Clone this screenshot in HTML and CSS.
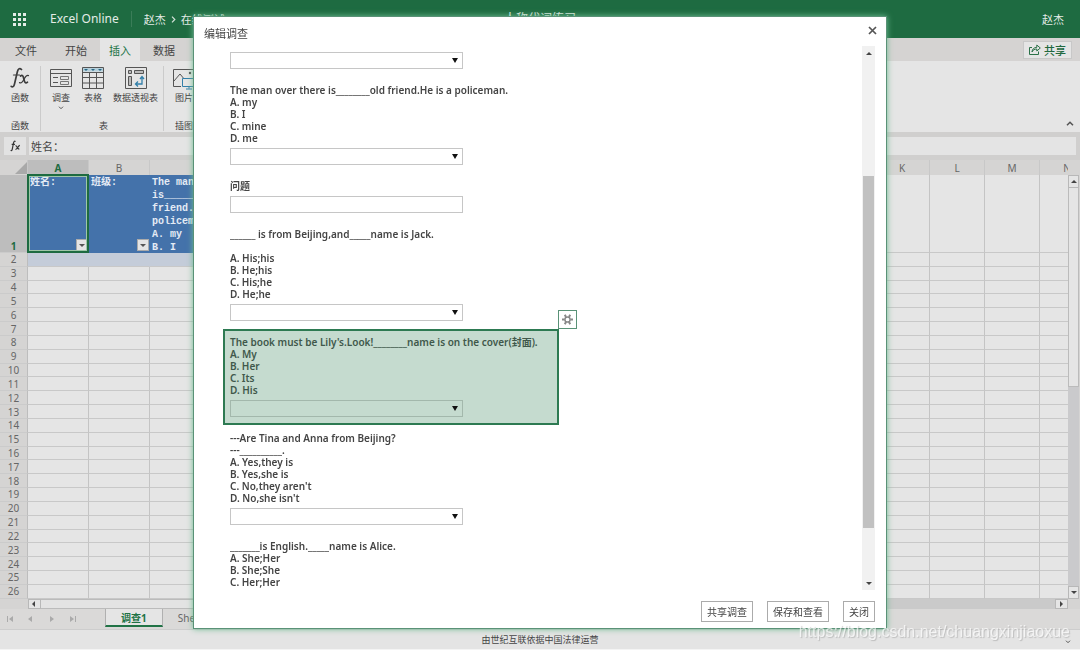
FILE: index.html
```html
<!DOCTYPE html>
<html lang="zh-CN">
<head>
<meta charset="utf-8">
<title>Excel Online</title>
<link rel="stylesheet" href="styles.css">
</head>
<body>
<div class="app">
  <header class="topbar">
    <button class="launcher" aria-label="应用启动器">
      <svg width="13" height="13" viewBox="0 0 13 13" fill="#e4ece7"><path d="M0 0h3v3H0zM5 0h3v3H5zM10 0h3v3h-3zM0 5h3v3H0zM5 5h3v3H5zM10 5h3v3h-3zM0 10h3v3H0zM5 10h3v3H5zM10 10h3v3h-3z"/></svg>
    </button>
    <span class="brand">Excel Online</span>
    <nav class="crumbs"><a href="#">赵杰</a><svg width="5" height="7" viewBox="0 0 5 7" fill="none" stroke="#d5e3da" stroke-width="1.2"><path d="M1 .7 3.8 3.5 1 6.3"/></svg><a href="#">在线测试</a></nav>
    <span class="doc-title">人称代词练习</span>
    <span class="user">赵杰</span>
  </header>

  <div class="tabs">
    <button class="tab tab-file">文件</button>
    <button class="tab">开始</button>
    <button class="tab tab-active">插入</button>
    <button class="tab">数据</button>
    <button class="share">
      <svg width="12" height="11" viewBox="0 0 12 11" fill="none" stroke="#2b7148" stroke-width="1"><path d="M3 3.5H.5v7h9V7.500"/><path d="M3 8c.3-3.200 2-4.500 4.800-4.600V1L11.300 4 7.800 7V5C5.500 5 4 6 3 8z"/></svg>
      共享
    </button>
  </div>

  <div class="ribbon">
    <section class="group">
      <div class="tools">
        <button class="tool tool-fx">
          <svg width="20" height="24" viewBox="0 0 20 24" fill="none" stroke="#3c3c3c" stroke-linecap="round"><path stroke-width="1.700" d="M11.500 3.500C9.500 1.500 8 3 7.300 6L4.500 18c-.6 2.800-2 3.500-3.300 2.300"/><path stroke-width="1.200" d="M3.500 9h6"/><path stroke-width="1.700" d="M10.500 10c2-1.500 2.700 0 3.300 2.800s1.300 5.500 3.700 3.400"/><path stroke-width="1.200" d="M18.500 9.600c-2-.8-3.300 1.400-4.500 3.600s-2.500 4.500-4.500 3.400"/></svg>
          <span>函数</span>
        </button>
      </div>
      <span class="group-name">函数</span>
    </section>
    <section class="group">
      <div class="tools">
        <button class="tool">
          <svg width="24" height="24" viewBox="0 0 24 24" fill="none" stroke="#555" ><path d="M1.500 3.500h21v17h-21z"/><path d="M1.500 7.500h21M4 11.500h5M4 16.500h5"/><path stroke="#777" d="M11.500 10.500h8v3h-8zM11.500 15.500h8v3h-8z"/></svg>
          <span>调查</span>
          <svg width="6" height="4" viewBox="0 0 6 4" fill="none" stroke="#555"><path d="M1 .7 3 2.700 5 .7"/></svg>
        </button>
        <button class="tool">
          <svg width="24" height="24" viewBox="0 0 24 24" fill="none" stroke="#555"><path fill="#b5d0dc" stroke="none" d="M2 2h20v3.500H2z"/><path d="M1.500 1.500h21v21h-21zM1.500 6.500h21M1.500 11.500h21M1.500 17h21M8.500 6.500v16M15.500 6.500v16"/><path fill="#286783" stroke="none" d="M3 3h4L5 5zM10 3h4l-2 2zM17 3h4l-2 2z"/></svg>
          <span>表格</span>
        </button>
        <button class="tool">
          <svg width="24" height="24" viewBox="0 0 24 24" fill="none" stroke="#555"><path d="M1.500 1.500h21v21h-21z"/><path fill="#bbb" d="M4.500 4.500h3v3h-3zM10.500 4.500h9v3h-9zM4.500 10.500h3v9h-3z"/><path stroke="#327fa9" stroke-width="1.300" d="M18 11v7h-6M16 13l2-2.500 2 2.500M14 15.500 11.500 18l2.500 2.500"/></svg>
          <span>数据透视表</span>
        </button>
      </div>
      <span class="group-name">表</span>
    </section>
    <section class="group">
      <div class="tools">
        <button class="tool">
          <svg width="24" height="24" viewBox="0 0 24 24" fill="none" stroke="#555"><path d="M22.500 9V3.500h-21v17H9M2 15l6-7 5 6"/><circle cx="18" cy="7" r="1.200" fill="#555" stroke="none"/><path fill="#e5e5e5" stroke="#327fa9" d="M10.500 12.500h13v8h-13zM17 20.500v2M14 23h6"/></svg>
          <span>图片</span>
        </button>
      </div>
      <span class="group-name">插图</span>
    </section>
    <button class="collapse" aria-label="折叠功能区"><svg width="8" height="5" viewBox="0 0 8 5" fill="none" stroke="#555" stroke-width="1.500"><path d="M1 4.300 4 1.300l3 3"/></svg></button>
  </div>

  <div class="formula">
    <button class="fx-button" aria-label="插入函数"><svg width="11" height="12" viewBox="0 0 20 22" fill="none" stroke="#333" stroke-width="2.200"><path d="M10 3C8 1 7 3 6.500 5L4 17c-.5 2.500-1.700 3-3 2M3 8h6M10 11c3-2 3 7 7 5M18 10c-3 0-5 8-8 7"/></svg></button>
    <input class="formula-input" aria-label="编辑栏" value="姓名：">
  </div>

  <main class="sheet">
    <div class="sheet-view">
      <table class="cells">
        <colgroup><col class="c-num"><col class="c-a"><col class="c-a"><col class="c-wide"><col span="11" class="c-std"></colgroup>
        <thead><tr class="letters"><th class="corner"><svg width="12" height="12" viewBox="0 0 12 12" fill="#a9a9a9"><path d="M12 0v12H0z"/></svg></th><th class="picked">A</th><th>B</th><th>C</th><th>D</th><th>E</th><th>F</th><th>G</th><th>H</th><th>I</th><th>J</th><th>K</th><th>L</th><th>M</th><th>N</th></tr></thead>
        <tbody id="rows">
          <tr class="row-head">
            <th class="picked">1</th>
            <td class="fill cursor"><div class="cell-text">姓名:</div><button class="filter" aria-label="筛选 A"></button></td>
            <td class="fill"><div class="cell-text">班级:</div><button class="filter" aria-label="筛选 B"></button></td>
            <td class="fill"><div class="cell-text">The man over there<br>is________old<br>friend.He is a<br>policeman.<br>A. my<br>B. I</div></td>
            <td></td><td></td><td></td><td></td><td></td><td></td><td></td><td></td><td></td><td></td><td></td>
          </tr>
        </tbody>
      </table>
    </div>
    <div class="vscroll"><span class="knob knob-up"></span><span class="vthumb"></span><span class="knob knob-down"></span></div>
  </main>

  <div class="hscroll"><span class="knob knob-left"></span><span class="hthumb"></span><span class="knob knob-right"></span></div>

  <div class="sheet-tabs">
    <div class="pager">
      <svg width="72" height="6" viewBox="0 0 72 6" fill="#aaa"><path d="M1 0h1v6H1zM7 0v6L3 3zM26 0v6l-4-3zM44 0l4 3-4 3zM64 0l4 3-4 3zM69 0h1v6h-1z"/></svg>
    </div>
    <button class="sheet-tab sheet-tab-active">调查1</button>
    <button class="sheet-tab">Sheet1</button>
  </div>

  <footer class="status"><span>由世纪互联依据中国法律运营</span><svg class="status-more" width="6" height="4" viewBox="0 0 6 4" fill="none" stroke="#555"><path d="M1 .7 3 2.700 5 .7"/></svg></footer>
</div>

<div class="overlay">
  <section class="dialog" role="dialog" aria-label="编辑调查">
    <header class="dialog-head">
      <h1>编辑调查</h1>
      <button class="close" aria-label="关闭窗口"><svg width="9" height="9" viewBox="0 0 9 9" stroke="#555" stroke-width="1.700"><path d="M1 1l7 7M8 1 1 8"/></svg></button>
    </header>
    <div class="dialog-body">
      <div class="questions">
        <div class="question question-cut"><select class="field" aria-label="答案"><option></option></select></div>
        <div class="question"><label for="q2">The man over there is________old friend.He is a policeman.<br>A. my<br>B. I<br>C. mine<br>D. me</label><select class="field" id="q2"><option></option></select></div>
        <div class="question"><label for="q3">问题</label><input class="field" id="q3" type="text"></div>
        <div class="question"><label for="q4">______ is from Beijing,and_____name is Jack.<br><br>A. His;his<br>B. He;his<br>C. His;he<br>D. He;he</label><select class="field" id="q4"><option></option></select></div>
        <div class="question question-active"><label for="q5">The book must be Lily's.Look!________name is on the cover(封面).<br>A. My<br>B. Her<br>C. Its<br>D. His</label><select class="field" id="q5"><option></option></select>
          <button class="gear" aria-label="设置"><svg width="11" height="11" viewBox="0 0 11 11" fill="none" stroke="#888"><circle cx="5.500" cy="5.500" r="2.600" stroke-width="1.500"/><path stroke-width="2" d="M8.500 5.500H11M2.500 5.500H0M7 2.900 8.200.8M4 8.100l-1.200 2.100M4 2.900 2.800.8M7 8.100l1.200 2.100"/></svg></button></div>
        <div class="question"><label for="q6">---Are Tina and Anna from Beijing?<br>---__________.<br>A. Yes,they is<br>B. Yes,she is<br>C. No,they aren't<br>D. No,she isn't</label><select class="field" id="q6"><option></option></select></div>
        <div class="question"><label for="q7">_______is English._____name is Alice.<br>A. She;Her<br>B. She;She<br>C. Her;Her<br>D. Her;his</label><select class="field" id="q7"><option></option></select></div>
      </div>
      <div class="dscroll"><span class="arrow arrow-up"></span><span class="dthumb"></span><span class="arrow arrow-down"></span></div>
    </div>
    <footer class="dialog-foot">
      <button class="action">共享调查</button>
      <button class="action">保存和查看</button>
      <button class="action">关闭</button>
    </footer>
  </section>
</div>
<span class="watermark">https://blog.csdn.net/chuangxinjiaoxue</span>
<script src="script.js"></script>
</body>
</html>
```
FILE: styles.css
```css
* { box-sizing: border-box; }
body {
  margin: 0;
  font-family: "Noto Sans", "Noto Sans CJK SC", sans-serif;
  font-size: 11px;
  color: #444;
}
button, input, select { font: inherit; color: inherit; margin: 0; padding: 0; border: 0; border-radius: 0; background: none; }
a { color: inherit; text-decoration: none; }
svg { display: block; flex: none; }

.app { display: flex; flex-direction: column; height: 100vh; background: #d5d4d3; overflow: hidden; }

/* top bar */
.topbar { position: relative; flex: none; height: 38px; display: flex; align-items: center; padding: 0 16px 0 13px; background: #1e6b41; color: #e4ece7; }
.brand { margin-left: 24px; padding-right: 12px; font-size: 12px; line-height: 16px; border-right: 1px solid #3a7d58; }
.crumbs { display: flex; align-items: center; gap: 3px; margin-left: 12px; }
.crumbs svg { margin: 0 2px; }
.doc-title { position: absolute; left: 0; right: 0; text-align: center; font-size: 12px; line-height: 16px; }
.user { margin-left: auto; }

/* tabs */
.tabs { flex: none; height: 23px; display: flex; align-items: center; gap: 4px; padding: 0 8px 0 6px; background: #d5d3d2; }
.tab { height: 23px; padding: 0 9px; }
.tab-file { margin-right: 6px; }
.tab-active { background: #e5e5e5; color: #217346; }
.share { margin-left: auto; display: flex; align-items: center; gap: 3px; height: 18px; padding: 0 5px; background: #e5e5e5; border: 1px solid #c8c8c8; color: #21693f; font-weight: 500; }

/* ribbon */
.ribbon { flex: none; height: 71px; display: flex; background: #e5e5e5; font-size: 9px; line-height: 12px; }
.group { display: flex; flex-direction: column; justify-content: space-between; align-items: center; margin: 5px 0 1px; padding: 0 5px 0 8px; border-right: 1px solid #cbcbcb; }
.group:first-child { padding: 0 10px; }
.group:nth-child(3) { border: 0; }
.tools { display: flex; align-items: flex-start; gap: 8px; }
.tool { display: flex; flex-direction: column; align-items: center; gap: 2px; line-height: 12px; min-width: 20px; white-space: nowrap; }
.group-name { line-height: 10px; }
.collapse { align-self: flex-end; margin: 0 6px 6px auto; }

/* formula bar */
.formula { flex: none; display: flex; gap: 3px; padding: 5px 4px 5px; background: #d0cfce; }
.fx-button { width: 22px; height: 18px; display: grid; place-items: center; background: #e2e2e2; }
.formula-input { flex: 1; min-width: 0; height: 18px; padding: 0 2px; background: #e4e4e4; }

/* grid */
.sheet { flex: 1; min-height: 0; display: flex; }
.sheet-view { flex: 1; min-width: 0; overflow: hidden; background: #e5e5e5; }
.cells { table-layout: fixed; width: 1095px; height: 100%; border-collapse: separate; border-spacing: 0; }
.c-num { width: 28px; }
.c-a { width: 61px; }
.c-wide { width: 340px; }
.c-std { width: 55px; }
.cells th { padding: 0; font-size: 10px; line-height: 12px; font-weight: 400; color: #666; background: #d5d4d3; border-right: 1px solid #c8c8c8; }
.cells td { padding: 0; border-right: 1px solid #c4c4c4; border-bottom: 1px solid #c8c8c8; line-height: 12px; }
.cells tbody th { border-bottom: 1px solid #cbcbcb; border-right: 1px solid #bdbdbd; }
.cells .picked { background: #bdbdbd; color: #1e6b41; font-weight: 700; }
.letters { height: 15px; }
.corner svg { margin-left: auto; }
.row-head { height: 78px; }
.row-head th { vertical-align: bottom; }
.cells .fill { position: relative; background: #4472aa; border-color: #4472aa; vertical-align: top; }
.cells .tint { background: #c4ccd9; border-right-color: #c4ccd9; }
.cell-text { height: 76px; padding: 1px 2px 0; overflow: hidden; font: 700 10px/13px "Liberation Mono", "Noto Sans CJK SC", monospace; color: #e4ebf5; white-space: nowrap; }
.cursor::after { content: ""; position: absolute; inset: -1px -1px -1px -1px; border: 2px solid #1e6b41; box-shadow: inset 0 0 0 1px #9fc6a8; pointer-events: none; }
.filter { position: absolute; right: 0; bottom: 1px; width: 12px; height: 12px; background: #e5e5e5; border: 1px solid #ababab; }
.filter::before { content: ""; position: absolute; left: 2px; top: 4px; border: 3px solid transparent; border-top-color: #555; border-bottom: 0; }

/* grid scroll bars */
.knob { position: relative; flex: none; background: #e5e5e5; border: 1px solid #b8b8b8; }
.knob::before { content: ""; position: absolute; left: 2px; top: 4px; border: 3px solid transparent; }
.knob-up::before { border-bottom-color: #444; border-top: 0; }
.knob-down::before { border-top-color: #444; border-bottom: 0; }
.knob-left::before { left: 3px; top: 1px; border-right-color: #444; border-left: 0; }
.knob-right::before { left: 4px; top: 1px; border-left-color: #444; border-right: 0; }
.vscroll { flex: none; width: 11px; margin: 15px 1px 0 0; display: flex; flex-direction: column; background: #cacacc; }
.vscroll .knob { height: 13px; }
.vthumb { height: 47%; background: #e5e5e5; border: 1px solid #bbb; border-top: 0; }
.vscroll .knob-down { margin-top: auto; }
.hscroll { flex: none; height: 10px; display: flex; margin: 0 12px 0 28px; background: #cacaca; }
.hscroll .knob { width: 13px; }
.hthumb { width: 60%; background: #e3e3e3; border: 1px solid #bbb; border-left: 0; }
.hscroll .knob-right { margin-left: auto; }

/* sheet tabs and status */
.sheet-tabs { flex: none; height: 21px; display: flex; align-items: flex-start; background: #dad9d8; border-bottom: 1px solid #cdcdcd; font-size: 10px; }
.pager { width: 105px; padding: 7px 0 0 6px; }
.sheet-tab { height: 18px; padding: 0 15px; color: #666; }
.sheet-tab-active { border: 1px solid #b0b0b0; border-top: 0; border-bottom: 2px solid #217346; background: #e5e5e5; color: #217346; font-weight: 700; }
.status { position: relative; flex: none; height: 20px; display: flex; align-items: center; justify-content: center; background: #e4e4e4; border-bottom: 1px solid #f4f4f4; font-size: 9px; }
.status-more { position: absolute; right: 9px; top: 10px; }

/* dialog */
.overlay { position: fixed; inset: 0; display: flex; justify-content: center; padding: 16px 0 21px; }
.dialog { width: 694px; max-width: 100%; display: flex; flex-direction: column; background: #fff; border: 1px solid #5a9277; box-shadow: 0 0 6px #6cbb90; }
.dialog-head { flex: none; height: 29px; display: flex; justify-content: space-between; padding: 9px 9px 0 10px; }
.dialog-head h1 { margin: 0; font-size: 11px; font-weight: 400; line-height: 16px; }
.close { width: 9px; height: 9px; }
.dialog-body { flex: 1; min-height: 0; display: flex; justify-content: space-between; padding: 0 11px 0 29px; }
.questions { flex: 1; min-width: 0; overflow: hidden; }
.question { position: relative; width: 336px; max-width: 100%; padding: 5px 5px 6px; border: 2px solid transparent; font-size: 10px; font-weight: 600; line-height: 12px; }
.question-cut { padding-top: 0; margin-top: 4px; }
.question label { display: block; margin-bottom: 4px; white-space: nowrap; }
.field { display: block; width: 233px; max-width: 100%; height: 17px; border: 1px solid #c6c6c6; background: #fff; }
select.field { appearance: none; }
.question:has(select)::after { content: ""; position: absolute; left: 227px; bottom: 12px; border: 3px solid transparent; border-top: 5px solid #111; border-bottom: 0; pointer-events: none; }
.question-active { border-color: #2d7a52; background: #c5dbcf; color: #40584b; }
.question-active .field { border-color: #a3b8ac; background: none; }
.gear { position: absolute; right: -20px; top: -21px; width: 19px; height: 19px; display: grid; place-items: center; background: #fff; border: 1px solid #5a9277; }
.dscroll { flex: none; width: 13px; display: flex; flex-direction: column; align-items: center; padding: 6px 0 5px; background: #f1f1f1; }
.arrow { border: 3px solid transparent; }
.arrow-up { border-bottom-color: #444; border-top: 0; margin-bottom: 121px; }
.arrow-down { border-top-color: #444; border-bottom: 0; margin-top: auto; }
.dthumb { width: 11px; height: 352px; background: #c1c1c1; }
.dialog-foot { flex: none; display: flex; justify-content: flex-end; gap: 14px; padding: 11px 11px 6px; }
.action { height: 21px; padding: 0 5px; border: 1px solid #ababab; background: #fff; font-size: 10px; }

.watermark { position: fixed; right: 10px; bottom: 9px; font: 16px/18px "Liberation Sans", sans-serif; color: rgba(255, 255, 255, .7); text-shadow: 1px 1px 1px rgba(120, 120, 120, .35); pointer-events: none; }
```
FILE: script.js
```js
const body = document.getElementById('rows');
for (let n = 2; n <= 26; n++) {
  const row = body.insertRow();
  const head = document.createElement('th');
  head.textContent = n;
  row.append(head);
  for (let c = 0; c < 14; c++) {
    const cell = row.insertCell();
    if (n === 2 && c < 10) cell.className = 'tint';
  }
}
```
